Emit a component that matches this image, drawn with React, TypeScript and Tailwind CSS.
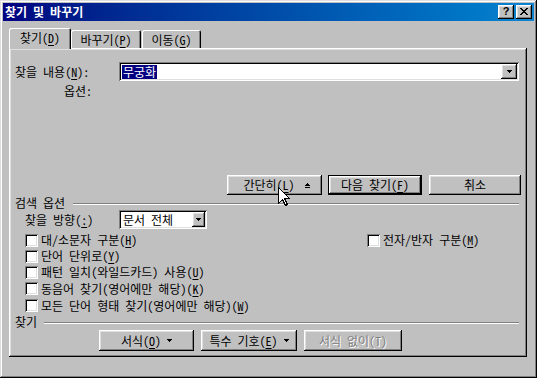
import React from "react";

const raised =
  "shadow-[inset_-1px_-1px_0_#000,inset_1px_1px_0_#fff,inset_-2px_-2px_0_#808080,inset_2px_2px_0_#dfdfdf]";
const sunken =
  "shadow-[inset_1px_1px_0_#808080,inset_-1px_-1px_0_#fff,inset_2px_2px_0_#000,inset_-2px_-2px_0_#dfdfdf]";
const defBtn =
  "shadow-[inset_0_0_0_1px_#000,inset_-2px_-2px_0_#000,inset_2px_2px_0_#fff,inset_-3px_-3px_0_#808080,inset_3px_3px_0_#dfdfdf]";

function U({ children }: { children: React.ReactNode }) {
  return <span className="underline decoration-1 underline-offset-[2px]">{children}</span>;
}

function DownGlyph() {
  return (
    <svg width="5" height="3" viewBox="0 0 5 3" shapeRendering="crispEdges" className="block">
      <rect x="0" y="0" width="5" height="1" fill="#000" />
      <rect x="1" y="1" width="3" height="1" fill="#000" />
      <rect x="2" y="2" width="1" height="1" fill="#000" />
    </svg>
  );
}

function UpGlyph() {
  return (
    <svg width="5" height="5" viewBox="0 0 5 5" shapeRendering="crispEdges" className="block">
      <rect x="2" y="0" width="1" height="1" fill="#000" />
      <rect x="1" y="1" width="3" height="1" fill="#000" />
      <rect x="0" y="2" width="5" height="1" fill="#000" />
      <rect x="0" y="4" width="5" height="1" fill="#000" />
    </svg>
  );
}

function Btn({
  w,
  h,
  def = false,
  disabled = false,
  children,
}: {
  w: string;
  h: string;
  def?: boolean;
  disabled?: boolean;
  children: React.ReactNode;
}) {
  return (
    <div
      className={`${w} ${h} bg-[#c0c0c0] ${def ? defBtn : raised} flex items-center justify-center leading-[14px] ${
        disabled ? "text-[#808080] [text-shadow:1px_1px_0_#fff]" : "text-black"
      }`}
    >
      {children}
    </div>
  );
}

function Check({ children }: { children: React.ReactNode }) {
  return (
    <div className="flex items-center">
      <div className={`w-[13px] h-[13px] bg-white ${sunken}`} />
      <span className="ml-[3px] leading-[14px] whitespace-nowrap">{children}</span>
    </div>
  );
}

function Separator({ label, gap }: { label: string; gap: string }) {
  return (
    <div className="flex h-[14px] pl-[6px] pr-[8px]">
      <span className="leading-[14px] whitespace-nowrap">{label}</span>
      <div className={`flex-1 ${gap} mt-[7px] h-[2px] border-t border-t-[#808080] border-b border-b-white`} />
    </div>
  );
}

function Cursor() {
  return (
    <svg
      width="13"
      height="20"
      viewBox="0 0 13 20"
      shapeRendering="crispEdges"
      className="absolute left-[278px] top-[187px]"
    >
      <polygon
        points="0.5,0.5 0.5,16.5 4.5,12.5 7.5,18.5 9.5,17.5 6.5,11.5 11.5,11.5"
        fill="#fff"
        stroke="#000"
        strokeWidth="1"
      />
    </svg>
  );
}

export default function App() {
  return (
    <div
      className={`relative w-[537px] h-[378px] bg-[#c0c0c0] p-[3px] flex flex-col text-[12px] text-black font-['Noto_Sans_Mono_CJK_KR','Noto_Sans_CJK_KR',sans-serif] shadow-[inset_-1px_-1px_0_#000,inset_1px_1px_0_#dfdfdf,inset_-2px_-2px_0_#808080,inset_2px_2px_0_#fff] select-none`}
    >
      {/* Title bar */}
      <div className="h-[18px] flex items-center justify-between pl-[2px] pr-[2px] bg-gradient-to-r from-[#000080] to-[#1084d0]">
        <span className="text-white font-bold text-[12px] leading-[14px] whitespace-nowrap">찾기 및 바꾸기</span>
        <div className="flex items-center gap-[2px]">
          <div className={`w-[16px] h-[14px] bg-[#c0c0c0] ${raised} flex items-center justify-center`}>
            <span className="font-['Liberation_Sans',sans-serif] font-bold text-[11px] leading-[11px] text-black -mt-[1px]">
              ?
            </span>
          </div>
          <div className={`w-[16px] h-[14px] bg-[#c0c0c0] ${raised} flex items-center justify-center`}>
            <svg width="8" height="7" viewBox="0 0 8 7" shapeRendering="crispEdges" className="block -mt-[1px]">
              <path
                d="M0 0h2v1h1v1h2v-1h1v-1h2v1h-1v1h-1v1h-1v1h1v1h1v1h1v1h-2v-1h-1v-1h-2v1h-1v1h-2v-1h1v-1h1v-1h1v-1h-1v-1h-1v-1h-1z"
                fill="#000"
              />
            </svg>
          </div>
        </div>
      </div>

      {/* Tabs */}
      <div className="mt-[7px] ml-[6px] h-[20px] flex items-end">
        <div
          className={`relative z-10 w-[62px] h-[21px] -mb-[1px] bg-[#c0c0c0] rounded-t-[2px] shadow-[inset_1px_1px_0_#fff,inset_-1px_0_0_#000,inset_-2px_0_0_#808080] flex justify-center pt-[3px] leading-[14px]`}
        >
          <span>
            찾기(<U>D</U>)
          </span>
        </div>
        <div className="w-[70px] h-[18px] bg-[#c0c0c0] rounded-t-[2px] shadow-[inset_1px_1px_0_#fff,inset_-1px_0_0_#000,inset_-2px_0_0_#808080] flex justify-center pt-[3px] leading-[14px]">
          <span>
            바꾸기(<U>P</U>)
          </span>
        </div>
        <div className="ml-[1px] w-[59px] h-[18px] bg-[#c0c0c0] rounded-t-[2px] shadow-[inset_1px_1px_0_#fff,inset_-1px_0_0_#000,inset_-2px_0_0_#808080] flex justify-center pt-[3px] leading-[14px]">
          <span>
            이동(<U>G</U>)
          </span>
        </div>
      </div>

      {/* Panel */}
      <div className={`ml-[6px] w-[518px] h-[309px] bg-[#c0c0c0] ${raised} flex flex-col`}>
        {/* find what */}
        <div className="mt-[14px] h-[19px] flex items-center">
          <div className="w-[110px] pl-[6px] leading-[14px] whitespace-nowrap">
            찾을 내용(<U>N</U>):
          </div>
          <div className={`w-[400px] h-[19px] bg-white ${sunken} flex items-center pl-[3px] pr-[2px]`}>
            <span className="bg-[#000080] text-white leading-[14px] h-[14px] px-[1px]">무궁화</span>
            <div className="flex-1" />
            <div className={`w-[16px] h-[15px] bg-[#c0c0c0] ${raised} flex items-center justify-center`}>
              <DownGlyph />
            </div>
          </div>
        </div>
        {/* options */}
        <div className="mt-[2px] h-[16px] flex items-center">
          <div className="w-[83px] text-right leading-[14px]">옵션:</div>
        </div>

        {/* main buttons */}
        <div className="mt-[76px] h-[20px] flex justify-end pr-[6px]">
          <Btn w="w-[95px]" h="h-[20px]">
            <span className="pl-[4px]">
              간단히(<U>L</U>)
            </span>
            <span className="ml-[10px]">
              <UpGlyph />
            </span>
          </Btn>
          <div className="ml-[6px]">
            <Btn w="w-[94px]" h="h-[20px]" def>
              <span>
                다음 찾기(<U>F</U>)
              </span>
            </Btn>
          </div>
          <div className="ml-[7px]">
            <Btn w="w-[92px]" h="h-[20px]">
              <span>취소</span>
            </Btn>
          </div>
        </div>

        {/* search options */}
        <div className="mt-[1px]">
          <Separator label="검색 옵션" gap="ml-[8px]" />
        </div>

        <div className="h-[19px] flex items-center">
          <div className="w-[110px] pl-[16px] leading-[14px] whitespace-nowrap">
            찾을 방향(<U>:</U>)
          </div>
          <div className={`w-[88px] h-[19px] bg-white ${sunken} flex items-center pl-[4px] pr-[2px]`}>
            <span className="leading-[14px] whitespace-nowrap">문서 전체</span>
            <div className="flex-1" />
            <div className={`w-[13px] h-[15px] bg-[#c0c0c0] ${raised} flex items-center justify-center`}>
              <DownGlyph />
            </div>
          </div>
        </div>

        <div className="mt-[3px] flex flex-col pl-[16px]">
          <div className="h-[16px] flex items-center">
            <div className="w-[342px]">
              <Check>
                대/소문자 구분(<U>H</U>)
              </Check>
            </div>
            <Check>
              전자/반자 구분(<U>M</U>)
            </Check>
          </div>
          <div className="h-[16px] flex items-center">
            <Check>
              단어 단위로(<U>Y</U>)
            </Check>
          </div>
          <div className="h-[16px] flex items-center">
            <Check>
              패턴 일치(와일드카드) 사용(<U>U</U>)
            </Check>
          </div>
          <div className="h-[17px] flex items-center">
            <Check>
              동음어 찾기(영어에만 해당)(<U>K</U>)
            </Check>
          </div>
          <div className="h-[17px] flex items-center">
            <Check>
              모든 단어 형태 찾기(영어에만 해당)(<U>W</U>)
            </Check>
          </div>
        </div>

        {/* find section */}
        <div className="mt-[1px]">
          <Separator label="찾기" gap="ml-[7px]" />
        </div>

        <div className="mt-[1px] h-[21px] flex pl-[90px]">
          <Btn w="w-[95px]" h="h-[21px]">
            <span>
              서식(<U>O</U>)
            </span>
            <span className="ml-[6px]">
              <DownGlyph />
            </span>
          </Btn>
          <div className="ml-[7px]">
            <Btn w="w-[96px]" h="h-[21px]">
              <span>
                특수 기호(<U>E</U>)
              </span>
              <span className="ml-[6px]">
                <DownGlyph />
              </span>
            </Btn>
          </div>
          <div className="ml-[7px]">
            <Btn w="w-[98px]" h="h-[21px]" disabled>
              <span>서식 없이(T)</span>
            </Btn>
          </div>
        </div>
      </div>

      <Cursor />
    </div>
  );
}
